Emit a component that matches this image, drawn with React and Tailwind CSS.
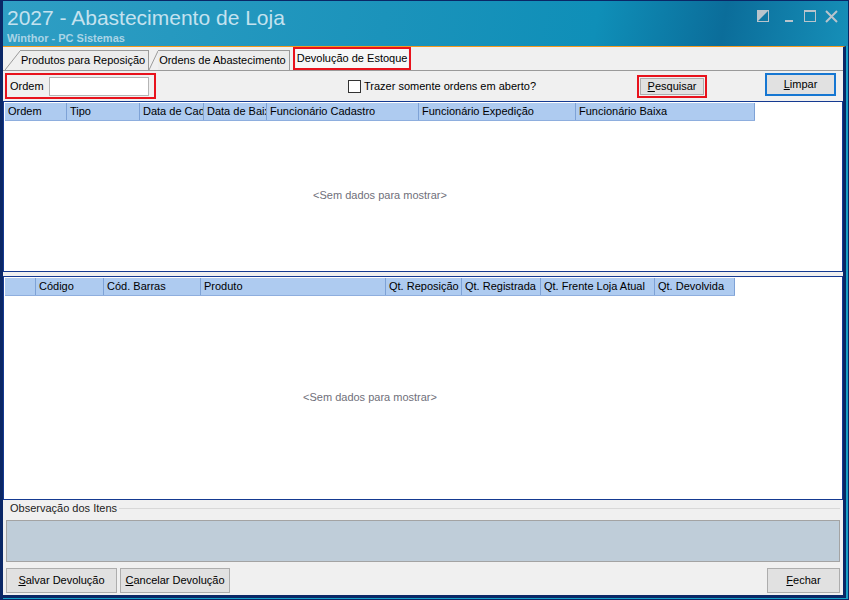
import React, { useState } from 'react';

const font = { fontFamily: '"Liberation Sans", Arial, sans-serif' };

const Tab = ({ label, active, slant }) => (
    <div className={`flex items-end h-full ${active ? '' : 'pt-[3px]'}`}>
        <svg width={slant} height={active ? 22 : 19} className="shrink-0">
            <line x1="0" y1={active ? 22 : 19} x2={slant} y2="0" stroke="#9a9a9a" strokeWidth="1" />
        </svg>
        <div
            className={`h-full flex items-center border-t border-r border-[#9a9a9a] pr-[3px] ${
                active ? 'bg-[#f7f7f7] pl-[1px]' : 'bg-[#ececec] pl-[1px]'
            }`}
        >
            {label}
        </div>
    </div>
);

const Btn = ({ children, className = '' }) => (
    <button className={`bg-[#e1e1e1] border border-[#adadad] text-black whitespace-nowrap ${className}`}>{children}</button>
);

const GridHeader = ({ cols }) => (
    <div className="flex h-[18px] bg-[#aecbf0] border-b border-[#8eaede] self-start shrink-0">
        {cols.map(([label, w], i) => (
            <div
                key={i}
                className="h-full flex items-center pl-[3px] border-r border-[#7ea2d6] overflow-hidden whitespace-nowrap"
                style={{ width: w }}
            >
                {label}
            </div>
        ))}
    </div>
);

// a mensagem fica centrada na largura das colunas, não da grade
const Empty = ({ width }) => (
    <div className="flex-1 flex items-center">
        <div className="text-center text-[11px] text-[#6f6f7a]" style={{ width }}>
            &lt;Sem dados para mostrar&gt;
        </div>
    </div>
);

export default function App() {
    const [aberto, setAberto] = useState(false);
    const [ordem, setOrdem] = useState('');

    const cols1 = [
        ['Ordem', 62],
        ['Tipo', 73],
        ['Data de Cad', 64],
        ['Data de Baix', 63],
        ['Funcionário Cadastro', 152],
        ['Funcionário Expedição', 157],
        ['Funcionário Baixa', 179],
    ];
    const cols2 = [
        ['', 31],
        ['Código', 68],
        ['Cód. Barras', 97],
        ['Produto', 185],
        ['Qt. Reposição', 76],
        ['Qt. Registrada', 79],
        ['Qt. Frente Loja Atual', 114],
        ['Qt. Devolvida', 80],
    ];
    const w1 = cols1.reduce((s, c) => s + c[1], 0);
    const w2 = cols2.reduce((s, c) => s + c[1], 0);

    return (
        <div className="w-[849px] h-[600px] bg-[#0a2766] pl-[3px] pt-[1px] pr-[1px] pb-[1px]" style={font}>
            <div className="h-full flex flex-col bg-[#17a1c6]">
                {/* barra de título */}
                <div className="h-[45px] shrink-0 flex justify-between bg-[linear-gradient(100deg,#2f9ec4_0%,#1b93bb_45%,#0f8fb8_70%,#0b6d9a_85%,#168fb8_100%)]">
                    <div className="pl-[4px] pt-[5px] flex flex-col">
                        <span className="text-[21px] leading-[24px] text-[#c4e2ef]">2027 - Abastecimento de Loja</span>
                        <span className="text-[11px] leading-[12px] font-bold text-[#a9d4e6] mt-[2px]">Winthor - PC Sistemas</span>
                    </div>
                    <div className="flex items-start pt-[9px] pr-[10px]">
                        <svg width="12" height="12" viewBox="0 0 12 12">
                            <rect x="0.5" y="0.5" width="11" height="11" fill="none" stroke="#b9c4cc" />
                            <polygon points="0,0 12,0 0,12" fill="#b9c4cc" />
                        </svg>
                        <svg width="9" height="13" viewBox="0 0 9 13" className="ml-[16px]">
                            <rect x="0" y="10" width="8" height="2" fill="#b9c4cc" />
                        </svg>
                        <svg width="12" height="12" viewBox="0 0 12 12" className="ml-[10px]">
                            <rect x="0.5" y="0.5" width="11" height="11" fill="none" stroke="#b9c4cc" />
                            <rect x="0" y="0" width="12" height="2" fill="#b9c4cc" />
                        </svg>
                        <svg width="13" height="13" viewBox="0 0 13 13" className="ml-[9px]">
                            <path d="M1 1 L12 12 M12 1 L1 12" stroke="#b9c4cc" strokeWidth="2" />
                        </svg>
                    </div>
                </div>

                {/* área do formulário */}
                <div className="flex-1 flex flex-col bg-[#f0f0f0] border-t border-t-[#f39a1e] border-r-[3px] border-b-[3px] border-[#0a2766] mr-[2px] mb-[1px] text-[12px] text-black">
                    {/* abas */}
                    <div className="h-[23px] flex items-end pl-[2px] shrink-0 text-[11px]">
                        <Tab label="Produtos para Reposição" slant={15} />
                        <Tab label="Ordens de Abastecimento" slant={9} />
                        <div className="ml-[3px] h-full flex items-stretch border-2 border-[#e8121c] px-[1px]">
                            <div className="flex items-center bg-[#f7f7f7] px-[1px]">Devolução de Estoque</div>
                        </div>
                    </div>

                    <div className="flex-1 flex flex-col border-t border-[#9a9a9a]">
                        {/* filtros */}
                        <div className="h-[30px] flex items-center shrink-0 text-[11px]">
                            <div className="ml-[2px] h-[26px] w-[151px] border-2 border-[#e8121c] flex items-center pl-[3px] gap-[5px]">
                                <span>Ordem</span>
                                <input
                                    value={ordem}
                                    onChange={(e) => setOrdem(e.target.value)}
                                    className="w-[100px] h-[19px] bg-white border border-[#b5b5b5] outline-none px-1"
                                />
                            </div>
                            <label className="ml-[192px] flex items-center gap-[3px] cursor-pointer">
                                <input
                                    type="checkbox"
                                    checked={aberto}
                                    onChange={(e) => setAberto(e.target.checked)}
                                    className="appearance-none w-[13px] h-[13px] border border-[#333] bg-white"
                                />
                                <span>Trazer somente ordens em aberto?</span>
                            </label>
                            <div className="ml-[101px] border-2 border-[#e8121c] px-[1px] py-[1px]">
                                <Btn className="w-[64px] h-[17px] text-[11px] leading-none">
                                    <u>P</u>esquisar
                                </Btn>
                            </div>
                            <div className="ml-[58px] mb-[4px] border-2 border-[#1677d2]">
                                <Btn className="w-[67px] h-[19px] text-[11px] leading-none border-[#e1e1e1]">
                                    <u>L</u>impar
                                </Btn>
                            </div>
                        </div>

                        {/* grade de ordens */}
                        <div className="h-[171px] shrink-0 flex flex-col bg-white border border-[#153a91] p-[1px] text-[11px]">
                            <GridHeader cols={cols1} />
                            <Empty width={w1} />
                        </div>

                        <div className="h-[4px] shrink-0" />

                        {/* grade de itens */}
                        <div className="h-[224px] shrink-0 flex flex-col bg-white border border-[#153a91] p-[1px] text-[11px]">
                            <GridHeader cols={cols2} />
                            <Empty width={w2} />
                        </div>

                        {/* observação */}
                        <div className="mt-[1px] mx-[3px] shrink-0 flex flex-col text-[11px]">
                            <div className="flex items-center gap-[2px] h-[14px]">
                                <span className="pl-[4px] text-[#222]">Observação dos Itens</span>
                                <div className="flex-1 border-t border-[#d8d8d8] mt-[1px]" />
                            </div>
                            <div className="mt-[5px] h-[42px] bg-[#bfcdd9] border border-[#a3a3a3]" />
                        </div>

                        {/* botões */}
                        <div className="flex items-center mt-[6px] px-[3px] gap-[3px] text-[11px]">
                            <Btn className="w-[111px] h-[25px] text-[11px]">
                                <u>S</u>alvar Devolução
                            </Btn>
                            <Btn className="w-[110px] h-[25px] text-[11px]">
                                <u>C</u>ancelar Devolução
                            </Btn>
                            <Btn className="ml-auto w-[73px] h-[25px] text-[11px]">
                                <u>F</u>echar
                            </Btn>
                        </div>
                    </div>
                </div>
            </div>
        </div>
    );
}
